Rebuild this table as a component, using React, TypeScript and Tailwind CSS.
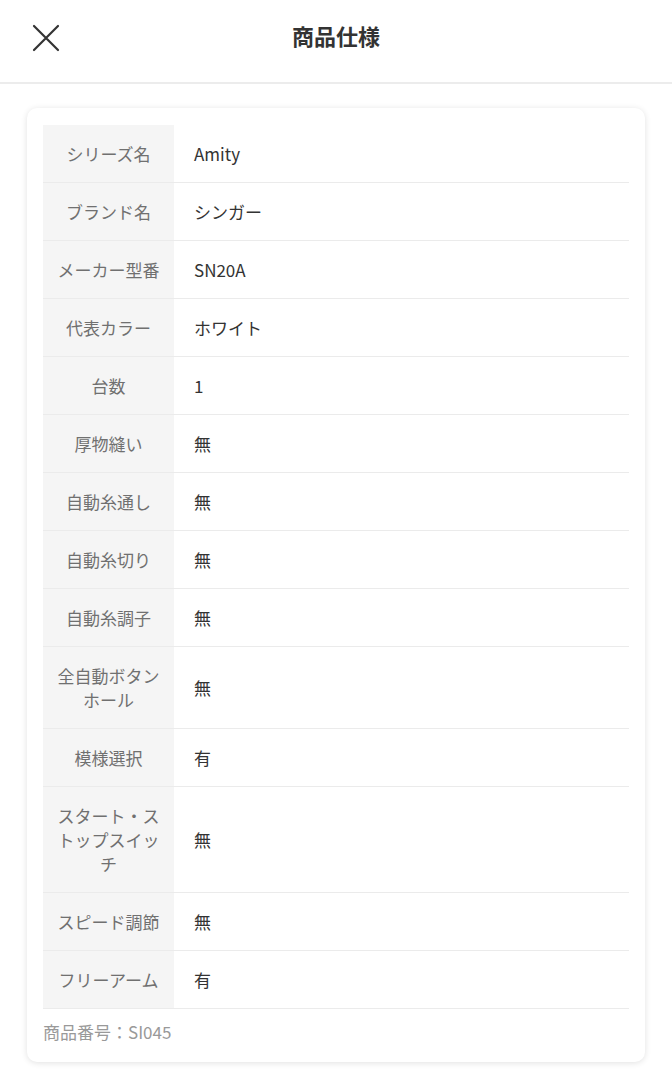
import React from "react";

const rows: [string, string][] = [
  ["シリーズ名", "Amity"],
  ["ブランド名", "シンガー"],
  ["メーカー型番", "SN20A"],
  ["代表カラー", "ホワイト"],
  ["台数", "1"],
  ["厚物縫い", "無"],
  ["自動糸通し", "無"],
  ["自動糸切り", "無"],
  ["自動糸調子", "無"],
  ["全自動ボタンホール", "無"],
  ["模様選択", "有"],
  ["スタート・ストップスイッチ", "無"],
  ["スピード調節", "無"],
  ["フリーアーム", "有"],
];

export default function App() {
  return (
    <div
      className="w-[672px] min-h-[1080px] bg-white text-[#333]"
      style={{ fontFamily: '"Noto Sans CJK JP", "Noto Sans", sans-serif' }}
    >
      <header className="relative h-[84px] flex items-center justify-center border-b-2 border-[#ececec]">
        <button className="absolute left-[31px] top-[23px] w-[30px] h-[30px] flex items-center justify-center">
          <svg width="30" height="30" viewBox="0 0 30 30" fill="none">
            <path d="M3 3L27 27M27 3L3 27" stroke="#333" strokeWidth="2.2" strokeLinecap="round" />
          </svg>
        </button>
        <h1 className="text-[22px] font-bold leading-none -mt-[12px] text-[#333]">商品仕様</h1>
      </header>
      <div className="px-[27px] pt-[24px] pb-[18px]">
        <div className="rounded-[10px] bg-white shadow-[0_1px_6px_rgba(0,0,0,0.12)] px-[16px] pt-[17px] pb-[18px]">
          <div className="flex flex-col">
            {rows.map(([k, v]) => (
              <div key={k} className="flex border-b border-[#ebebeb]">
                <div className="w-[131px] shrink-0 bg-[#f5f5f5] px-[12px] py-[16.5px] text-center text-[17px] leading-6 text-[#707070] flex items-center justify-center">
                  <span>{k}</span>
                </div>
                <div className="flex-1 pl-[20px] py-[16.5px] text-[17px] leading-6 text-[#333] flex items-center">
                  {v}
                </div>
              </div>
            ))}
          </div>
          <div className="pt-[11px] text-[17px] leading-6 text-[#999]">商品番号：SI045</div>
        </div>
      </div>
    </div>
  );
}
